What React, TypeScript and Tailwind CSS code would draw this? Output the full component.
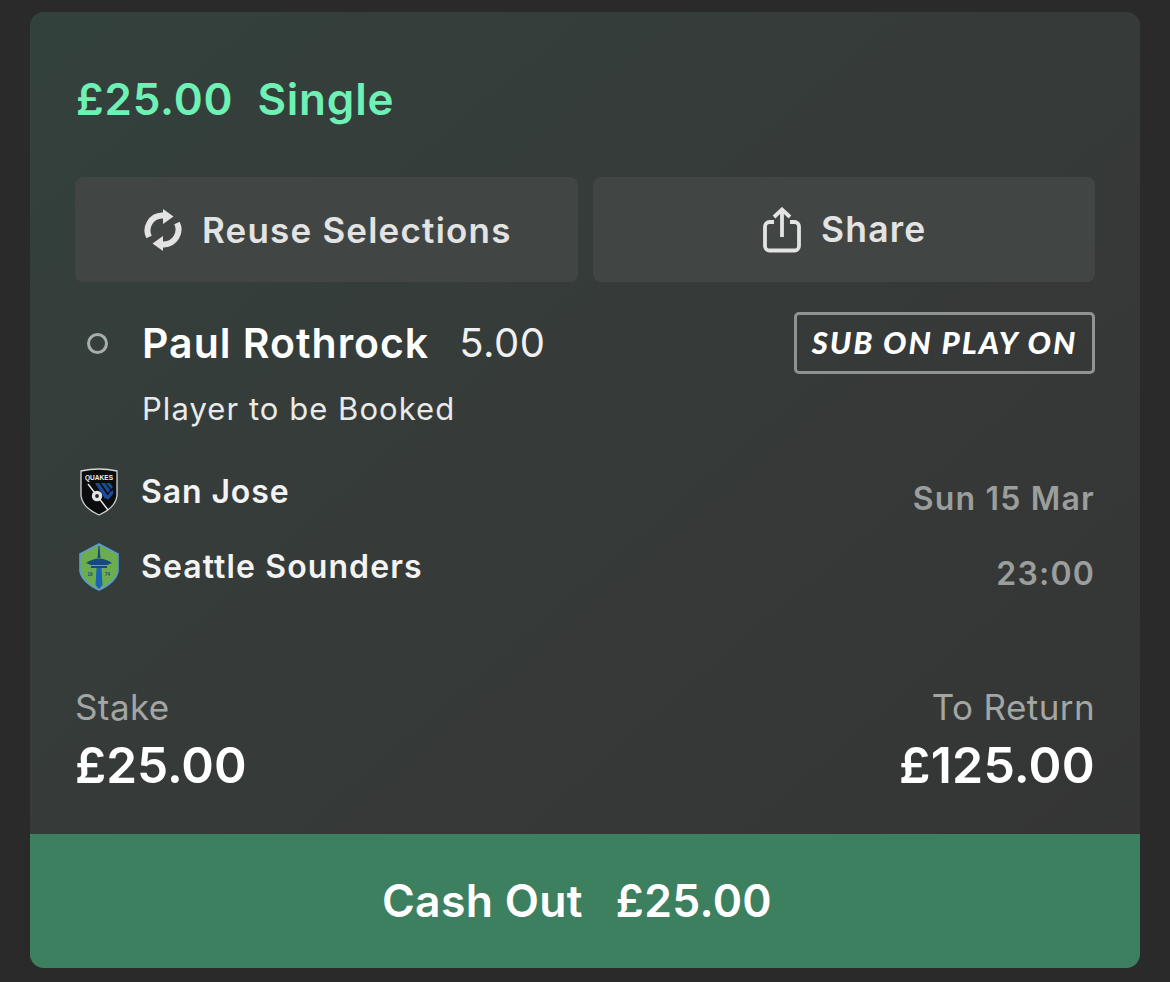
const INTER = "font-['Inter','Noto_Sans',sans-serif]";

const RefreshIcon = () => (
	<svg width="38" height="42" viewBox="0 0 38 42" fill="none" className="shrink-0">
		<path d="M5 28 A15 15 0 0 1 18 6.5 L21 6.5" stroke="#e2e3e2" strokeWidth="6" />
		<path d="M19 0 L29.5 7.5 L19 15 Z" fill="#e2e3e2" />
		<path d="M33 14 A15 15 0 0 1 20 35.5 L17 35.5" stroke="#e2e3e2" strokeWidth="6" />
		<path d="M19 27 L8.5 34.5 L19 42 Z" fill="#e2e3e2" />
	</svg>
);

const ShareIcon = () => (
	<svg width="38" height="46" viewBox="0 0 38 46" fill="none" stroke="#e2e3e2" strokeWidth="3.8" className="shrink-0">
		<path d="M11 15 H6.5 a4.5 4.5 0 0 0 -4.5 4.5 V39 a4.5 4.5 0 0 0 4.5 4.5 H31.5 a4.5 4.5 0 0 0 4.5 -4.5 V19.5 a4.5 4.5 0 0 0 -4.5 -4.5 H27" />
		<path d="M19 30 V3" />
		<path d="M11 10 L19 2.5 L27 10" />
	</svg>
);

const QuakesLogo = () => (
	<svg width="42" height="48" viewBox="0 0 42 48" className="shrink-0 overflow-visible">
		<path d="M3 3 Q21 -1 39 3 V28 Q37 40 21 47 Q5 40 3 28 Z" fill="#0b0c0e" stroke="#d4d6d8" strokeWidth="1.3" />
		<text x="21" y="11.5" textAnchor="middle" fontSize="7" fontWeight="700" fill="#f2f2f2" fontFamily="Liberation Sans, sans-serif" textLength="28" lengthAdjust="spacingAndGlyphs">QUAKES</text>
		<path d="M17 15 L21 15 L30 28 L27 31 Z M23 15 H27 L32 22 L30 25 Z M28 15 H32 L35 19 L33 21 Z M32 24 L35 22 V26 L30 32 L28 30 Z" fill="#1c4a9c" />
		<path d="M10 16 L30 42" stroke="#ececec" strokeWidth="1.4" fill="none" />
		<circle cx="19" cy="28" r="5.2" fill="#e6e6e6" />
		<circle cx="19" cy="28" r="1.9" fill="#222" />
	</svg>
);

const SoundersLogo = () => (
	<svg width="42" height="48" viewBox="0 0 42 48" className="shrink-0">
		<path d="M21 1 L40 11 V28 Q38 39 21 47 Q4 39 2 28 V11 Z" fill="#6cae4f" stroke="#5a9bd0" strokeWidth="1.6" />
		<path d="M20.5 3 H21.5 L22.5 15 H19.5 Z" fill="#17487f" />
		<path d="M8 20 Q21 11 34 20 L29 22 H13 Z" fill="#17487f" />
		<rect x="13" y="23" width="16" height="2" fill="#17487f" />
		<path d="M18.5 25 H23.5 L24.5 42 L21 46 L17.5 42 Z" fill="#1b63b0" />
		<text x="9.5" y="33" fontSize="4.5" fontWeight="700" fill="#17487f" fontFamily="Liberation Sans, sans-serif">19</text>
		<text x="27" y="33" fontSize="4.5" fontWeight="700" fill="#17487f" fontFamily="Liberation Sans, sans-serif">74</text>
	</svg>
);

export default function App() {
	return (
		<div className={`h-[982px] w-[1170px] bg-[#2a2a2a] px-[30px] pt-3 ${INTER}`}>
			<div className="flex h-[956px] flex-col overflow-hidden rounded-[14px] bg-gradient-to-br from-[#33413d] via-[#363a38] to-[#343534]">
				<div className="flex-1 px-[45px]">
					<div className="mt-[60px] flex h-[54px] items-center gap-[24px] pl-[1px] text-[44px] font-semibold leading-none tracking-[0.8px] text-[#6ff0b4]">
						<span>£25.00</span>
						<span>Single</span>
					</div>
					<div className="mt-[51px] grid grid-cols-2 gap-[15px]">
						<div className="flex h-[105px] items-center justify-center gap-[20px] rounded-[8px] bg-[#414644] pl-[3px] pt-[1px]">
							<RefreshIcon />
							<span className="text-[35px] font-semibold tracking-[1.2px] text-[#e2e3e2]">Reuse Selections</span>
						</div>
						<div className="flex h-[105px] items-center justify-center gap-[20px] rounded-[8px] bg-[#414644] pl-[2px] pt-[1px]">
							<ShareIcon />
							<span className="text-[35.5px] font-semibold tracking-[1.2px] text-[#e2e3e2]">Share</span>
						</div>
					</div>
					<div className="mt-[30px] flex items-center">
						<span className="ml-[12px] h-[21px] w-[21px] rounded-full border-[3.5px] border-[#a9adab]" />
						<span className="ml-[34px] text-[41px] font-semibold leading-[62px] tracking-[1px] text-white">Paul Rothrock</span>
						<span className="ml-[30px] text-[40px] font-normal leading-[62px] tracking-[0.5px] text-[#f0f0f0]">5.00</span>
						<span className="ml-auto flex h-[62px] w-[301px] items-center justify-center rounded-[5px] border-[3px] border-[#8f9391] pb-[1px] font-['Lato',sans-serif] text-[31px] font-black italic tracking-[2px] text-white">SUB ON PLAY ON</span>
					</div>
					<div className="mt-[13px] pl-[67px] text-[31px] leading-[44px] tracking-[1.05px] text-[#e9eaea]">Player to be Booked</div>
					<div className="mt-[37px] flex items-start justify-between">
						<div>
							<div className="flex h-[48px] items-center gap-[21px] pl-[3px]">
								<QuakesLogo />
								<span className="text-[32px] font-semibold tracking-[0.9px] text-[#f3f3f3]">San Jose</span>
							</div>
							<div className="mt-[27px] flex h-[48px] items-center gap-[21px] pl-[3px]">
								<SoundersLogo />
								<span className="text-[32px] font-semibold tracking-[1.1px] text-[#f3f3f3]">Seattle Sounders</span>
							</div>
						</div>
						<div className="text-right text-[32px] font-semibold tracking-[1.2px] text-[#9b9e9c]">
							<div className="mt-[7px] h-[48px] leading-[48px]">Sun 15 Mar</div>
							<div className="mt-[27px] h-[48px] leading-[48px]">23:00</div>
						</div>
					</div>
					<div className="mt-[87px] flex items-start justify-between">
						<div>
							<div className="text-[35px] leading-[44px] tracking-[0.4px] text-[#a3a6a4]">Stake</div>
							<div className="mt-[6px] text-[49.5px] font-semibold leading-[60px] text-white">£25.00</div>
						</div>
						<div className="text-right">
							<div className="text-[35px] leading-[44px] tracking-[0.4px] text-[#a3a6a4]">To Return</div>
							<div className="mt-[6px] text-[50px] font-semibold leading-[60px] tracking-[0.2px] text-white">£125.00</div>
						</div>
					</div>
				</div>
				<div className="flex h-[134px] items-center justify-center gap-[33px] bg-[#3d8060] pr-[16px] text-[44.5px] font-semibold tracking-[0.3px] text-white">
					<span>Cash Out</span>
					<span>£25.00</span>
				</div>
			</div>
		</div>
	);
}
